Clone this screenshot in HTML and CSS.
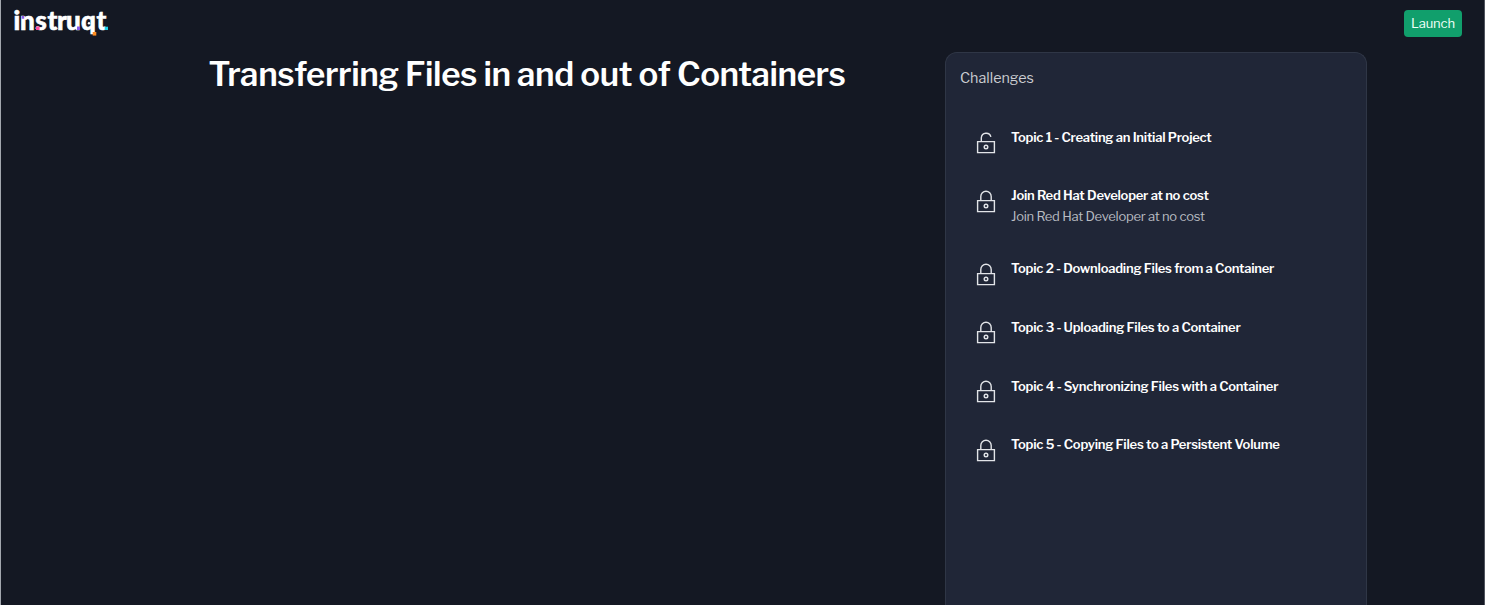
FILE: index.html
```html
<!DOCTYPE html>
<html lang="en">
<head>
<meta charset="utf-8">
<title>Transferring Files in and out of Containers</title>
<link rel="stylesheet" href="styles.css">
</head>
<body>
<svg class="symbols" aria-hidden="true">
  <symbol id="locked" viewBox="0 0 20 24">
    <path d="M1.6 10.6h16.8v11H1.6zM4.800 10.6V6.5a5.2 5.2 0 0 1 10.4 0v4.1"/>
    <circle cx="10" cy="16" r="1.8"/>
  </symbol>
  <symbol id="unlocked" viewBox="0 0 20 24">
    <path d="M1.6 10.6h16.8v11H1.6zM5.3 10.6V6.7a4.9 4.9 0 0 1 9.6-.8"/>
    <circle cx="10" cy="16" r="1.8"/>
  </symbol>
</svg>
<header class="topbar">
  <svg class="logo" viewBox="0 0 98 34" role="img" aria-label="instruqt">
    <text class="wordmark" x="1.5 8 23.300 35.500 45 54 69 84.500" y="21.700">instruqt</text>
    <circle cx="77" cy="15.300" r="1.200" fill="#fff"/>
    <path fill="#8a5be8" d="M9.700 8h2.500v2.700H9.700zM65 18.500h3V22h-3z"/>
    <path fill="#ff4fa0" d="M24 18.500h3.600V22H24z"/>
    <path fill="#ff8c1f" d="M80.700 24h3.600v3.600h-3.600z"/>
    <path fill="#1fd0ea" d="M92.700 18.700H96V22h-3.300z"/>
  </svg>
  <button class="launch">Launch</button>
</header>
<main class="content">
  <h1 class="title">Transferring Files in and out of Containers</h1>
  <section class="panel">
    <h2 class="panel-title">Challenges</h2>
    <ol class="challenges">
      <li class="challenge"><svg class="lock"><use href="#unlocked"/></svg><div><h3 class="name">Topic 1 - Creating an Initial Project</h3></div></li>
      <li class="challenge"><svg class="lock"><use href="#locked"/></svg><div><h3 class="name">Join Red Hat Developer at no cost</h3><p class="teaser">Join Red Hat Developer at no cost</p></div></li>
      <li class="challenge"><svg class="lock"><use href="#locked"/></svg><div><h3 class="name">Topic 2 - Downloading Files from a Container</h3></div></li>
      <li class="challenge"><svg class="lock"><use href="#locked"/></svg><div><h3 class="name">Topic 3 - Uploading Files to a Container</h3></div></li>
      <li class="challenge"><svg class="lock"><use href="#locked"/></svg><div><h3 class="name">Topic 4 - Synchronizing Files with a Container</h3></div></li>
      <li class="challenge"><svg class="lock"><use href="#locked"/></svg><div><h3 class="name">Topic 5 - Copying Files to a Persistent Volume</h3></div></li>
    </ol>
  </section>
</main>
</body>
</html>
```

FILE: styles.css
```css
* { box-sizing: border-box; margin: 0; padding: 0; }
body {
  height: 605px;
  overflow: hidden;
  background: #141823;
  border-left: 1px solid #a3a7ae;
  border-right: 1px solid #50545e;
  color: #fff;
  font-family: "Libre Franklin", Inter, "Liberation Sans", sans-serif;
}
.symbols { display: none; }
.topbar {
  height: 52px;
  padding: 8px 22px 0 11px;
  display: flex;
  justify-content: space-between;
  align-items: flex-start;
}
.logo { width: 98px; height: 34px; overflow: visible; }
.wordmark { font: 900 26px Lato, sans-serif; fill: #fff; stroke: #fff; stroke-width: 0.6px; }
.launch {
  width: 58px;
  height: 27px;
  margin-top: 2px;
  padding-bottom: 2px;
  border: 0;
  border-radius: 4px;
  background: #119f6c;
  color: #f2fff9;
  font: 400 13px "Libre Franklin", Inter, sans-serif;
  letter-spacing: -0.1px;
}
.content { display: grid; grid-template-columns: 736.500px 422px; padding-left: 207.500px; }
.title { font-size: 33px; line-height: 44px; font-weight: 600; letter-spacing: -0.410px; white-space: nowrap; }
.panel {
  height: 553px;
  padding: 14px 14px 0;
  border: 1px solid #2f3646;
  border-bottom: 0;
  border-radius: 12px 12px 0 0;
  background: #202637;
}
.panel-title { font-size: 14.3px; line-height: 22px; font-weight: 400; color: #cbcdd1; }
.challenges { list-style: none; padding: 36px 0 0 16px; display: grid; gap: 32px; }
.challenge { display: flex; gap: 15px; height: 26.600px; }
.challenge:nth-child(2) { height: 41px; }
.lock {
  width: 20px;
  height: 24px;
  margin-top: 6.200px;
  fill: none;
  stroke: #e2e4e8;
  stroke-width: 1.4;
  flex: none;
}
.name { padding-top: 0.800px; font-size: 13px; line-height: 22px; font-weight: 600; letter-spacing: -0.240px; white-space: nowrap; }
.teaser { font-size: 13px; line-height: 21px; color: #b9bcc2; letter-spacing: -0.250px; white-space: nowrap; }
```
